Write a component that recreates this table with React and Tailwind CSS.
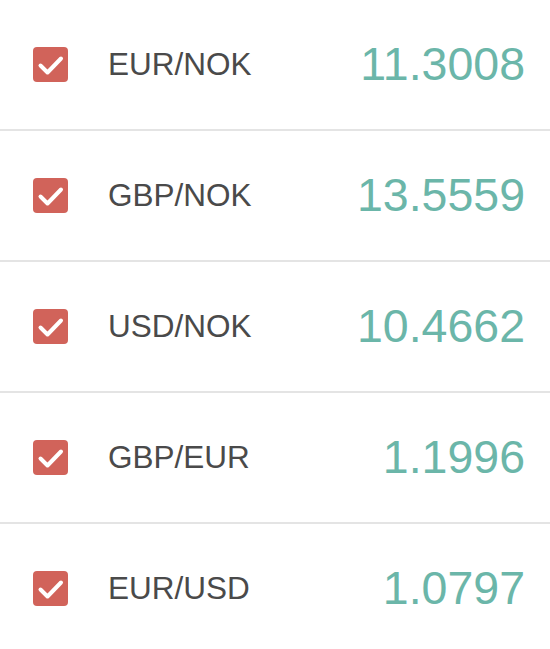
import React, { useState } from 'react';

const PAIRS = [
  { pair: 'EUR/NOK', rate: '11.3008' },
  { pair: 'GBP/NOK', rate: '13.5559' },
  { pair: 'USD/NOK', rate: '10.4662' },
  { pair: 'GBP/EUR', rate: '1.1996' },
  { pair: 'EUR/USD', rate: '1.0797' },
];

function Check({ on, onToggle }) {
  return (
    <button
      onClick={onToggle}
      className={`w-[35px] h-[35px] rounded-[4px] flex items-center justify-center shrink-0 ${on ? 'bg-[#d1635a]' : 'bg-white border-2 border-[#ccc]'}`}
    >
      {on && (
        <svg width="35" height="35" viewBox="0 0 35 35">
          <path d="M7.5 18.5 L14.5 25.5 L28 11.5" fill="none" stroke="#fff" strokeWidth="4" strokeLinecap="round" strokeLinejoin="round" />
        </svg>
      )}
    </button>
  );
}

export default function App() {
  const [checked, setChecked] = useState(PAIRS.map(() => true));

  const toggle = (i) => {
    setChecked(c => c.map((v, j) => (j === i ? !v : v)));
  };

  return (
    <div className="w-[550px] h-[649px] overflow-hidden bg-white font-['Liberation_Sans',Arial,sans-serif]">
      {PAIRS.map((p, i) => (
        <div key={p.pair} className="h-[131px] flex items-center border-b-2 border-[#e4e4e4] pl-[33px] pr-[25px]">
          <Check on={checked[i]} onToggle={() => toggle(i)} />
          <span className="ml-[40px] text-[31.5px] text-[#4a4a4a] leading-none">{p.pair}</span>
          <span className="ml-auto text-[46.5px] text-[#6bb6a9] leading-none">{p.rate}</span>
        </div>
      ))}
    </div>
  );
}
